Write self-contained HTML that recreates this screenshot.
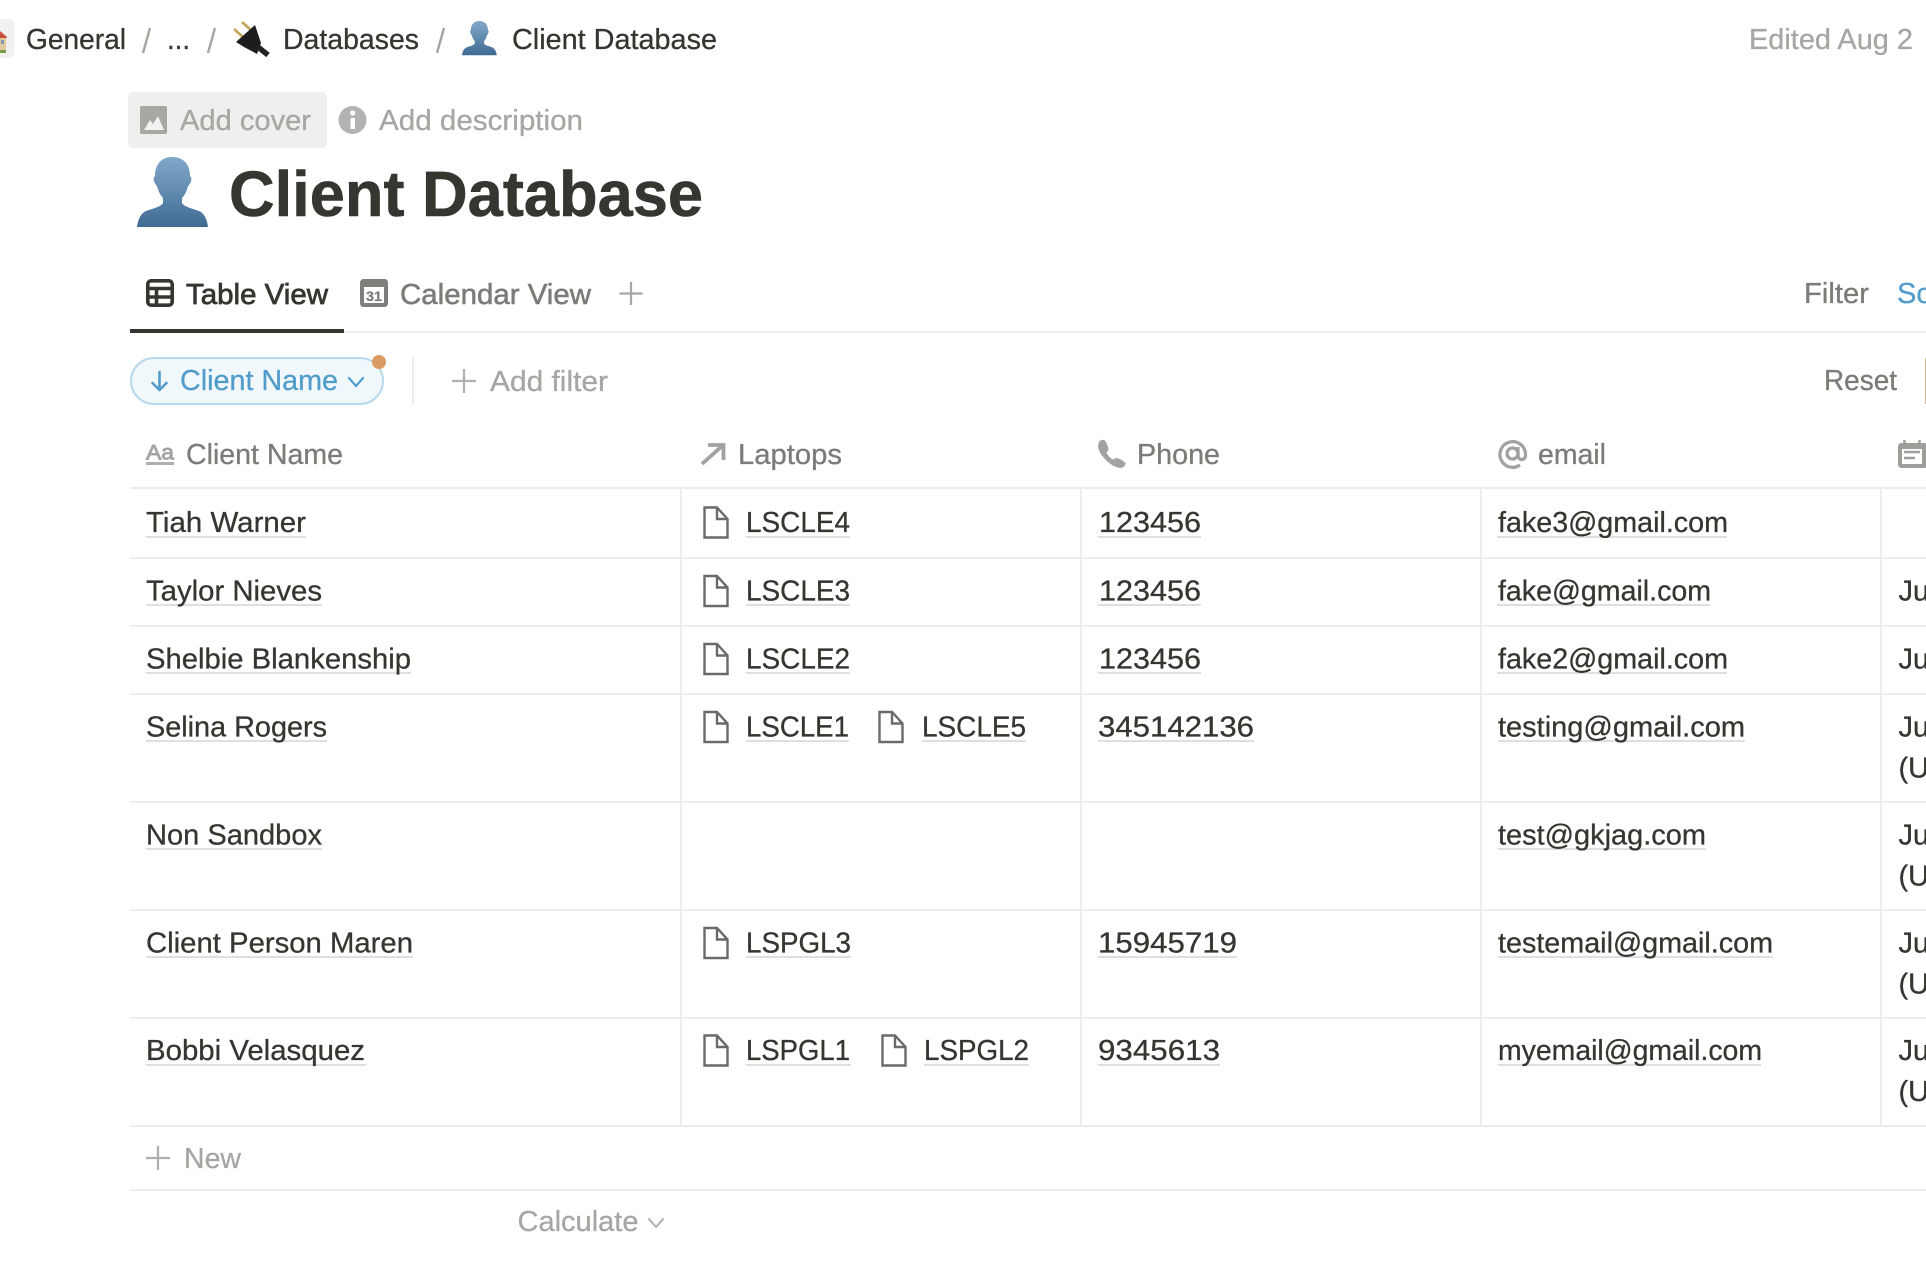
<!DOCTYPE html>
<html lang="en">
<head>
<meta charset="utf-8">
<title>Client Database</title>
<style>
html,body{margin:0;padding:0;background:#fff;width:1926px;height:1284px;overflow:hidden}
svg{display:block}
text{font-family:"Liberation Sans",sans-serif;font-size:29px;fill:#37352f;stroke:#37352f;stroke-width:.3px}
.g{fill:#7c7b77;stroke:#7c7b77}
.l{fill:#a7a6a3;stroke:#a7a6a3}
.b{fill:#529cca;stroke:#529cca}
.t{font-size:64px;font-weight:700;stroke-width:.6px}
.m{stroke-width:.75px}
.u{fill:#dfdfdd}
.h{fill:#ededec}
.s{fill:none;stroke-linecap:round;stroke-linejoin:round}
</style>
</head>
<body>
<svg xmlns="http://www.w3.org/2000/svg" width="1926" height="1284" viewBox="0 0 1926 1284">
<defs>
<linearGradient id="pg" x1="0" y1="0" x2="0" y2="1"><stop offset="0" stop-color="#82a9ca"/><stop offset="1" stop-color="#3f6a92"/></linearGradient>
<path id="p" fill="url(#pg)" d="M172 157C161 157 155 165 155 176C154 177 153 178 154 181C155 184 156 185 157 186C158 190 160 195 163 198L163 203C161 207 151 209 146 211C141 213 138 219 137 227L208 227C207 219 204 213 199 211C194 209 184 207 182 203L182 198C185 195 187 190 188 186C189 185 190 184 191 181C192 178 191 177 190 176C190 165 184 157 172 157Z"/>
<g id="d" fill="none" stroke="#6b6a66" stroke-width="2.4" stroke-linejoin="miter"><path d="M704.5 507.5H717L727.5 519V537.5H704.5Z"/><path d="M717 507.5V519H727.5"/></g>
</defs>
<rect width="1926" height="1284" fill="#fff"/>

<!-- breadcrumb -->
<rect x="-12" y="19" width="26" height="39" rx="5" fill="#f1f1ef"/>
<path d="M0 31L7 37V38H0Z" fill="#c9503f"/>
<rect x="0" y="38" width="6" height="12" fill="#e4c9a0"/>
<rect x="1" y="40" width="3" height="4" fill="#7e9bb0"/>
<rect x="0" y="50" width="6" height="3" fill="#7f9a4a"/>
<text x="26" y="49" textLength="100" lengthAdjust="spacingAndGlyphs">General</text>
<path d="M150 28L143 53M215 28L208 53M444 28L437 53" stroke="#a6a5a2" stroke-width="2.4" fill="none"/>
<text x="167" y="49" textLength="23" lengthAdjust="spacingAndGlyphs">...</text>
<path d="M242 22L252 31M234 29L244 38" stroke="#c4a65a" stroke-width="2.8"/>
<path d="M255 25L236 42L244 47L257 54L261 43Z" fill="#1d1d1d"/>
<path d="M258 47L268 55" stroke="#222" stroke-width="5.500"/>
<text x="283" y="49" textLength="136" lengthAdjust="spacingAndGlyphs">Databases</text>
<use href="#p" transform="translate(462 21) scale(.49) translate(-137 -157)"/>
<text x="512" y="49" textLength="205" lengthAdjust="spacingAndGlyphs">Client Database</text>
<text class="l" x="1749" y="49" textLength="164" lengthAdjust="spacingAndGlyphs">Edited Aug 2</text>

<!-- cover / description -->
<rect x="128" y="92" width="199" height="56" rx="5" fill="#efefee"/>
<rect x="140" y="106" width="27" height="28" rx="2" fill="#a8a7a4"/>
<path d="M144 130L150 120L153 124L158 116L164 130Z" fill="#f2f2f1"/>
<text class="l" x="180" y="130" textLength="131" lengthAdjust="spacingAndGlyphs">Add cover</text>
<circle cx="352.500" cy="120" r="14" fill="#b4b3b1"/>
<rect x="350.500" y="118" width="4.500" height="11" fill="#fff"/>
<circle cx="352.700" cy="113" r="2.600" fill="#fff"/>
<text class="l" x="379" y="130" textLength="204" lengthAdjust="spacingAndGlyphs">Add description</text>

<!-- title -->
<use href="#p"/>
<text class="t" x="229" y="216" textLength="474" lengthAdjust="spacingAndGlyphs">Client Database</text>

<!-- tabs -->
<g fill="none" stroke="#37352f" stroke-width="3.600"><rect x="147.800" y="280.800" width="24.400" height="24.400" rx="3.500"/><path d="M147.800 288.500H172.200M147.800 297H172.200M156.500 288.500V305.200"/></g>
<text class="m" x="186" y="304" textLength="142" lengthAdjust="spacingAndGlyphs">Table View</text>
<rect x="360" y="279" width="28" height="28" rx="3.500" fill="#7f7e7a"/>
<rect x="364" y="287" width="20" height="16" fill="#fff"/>
<text x="366" y="301" style="font-size:14px;font-weight:700;fill:#7f7e7a;stroke:#7f7e7a" textLength="16" lengthAdjust="spacingAndGlyphs">31</text>
<text class="g m" style="stroke-width:.55px" x="400" y="304" textLength="191" lengthAdjust="spacingAndGlyphs">Calendar View</text>
<path d="M631 282V305M619.500 293.500H642.500" stroke="#a7a6a3" stroke-width="2.200" fill="none"/>
<text class="g" x="1804" y="303" textLength="65" lengthAdjust="spacingAndGlyphs">Filter</text>
<text class="b" x="1897" y="303">Sort</text>
<rect x="130" y="331" width="1796" height="2" class="h"/>
<rect x="130" y="329" width="214" height="4" fill="#37352f"/>

<!-- filter row -->
<rect x="131" y="358" width="252" height="46" rx="23" fill="#f0f8fc" stroke="#b7d8ea" stroke-width="2"/>
<circle cx="379" cy="362" r="7" fill="#db9b63"/>
<path d="M159.500 372V390M152.500 383L159.500 390L166.500 383" class="s" stroke="#529cca" stroke-width="2.600"/>
<text class="b" x="180" y="390" textLength="158" lengthAdjust="spacingAndGlyphs">Client Name</text>
<path d="M349 378L356 386L363 378" class="s" stroke="#529cca" stroke-width="2.200"/>
<rect x="412" y="357" width="2" height="48" fill="#ededec"/>
<path d="M464 369V393M452 381H476" stroke="#b0afad" stroke-width="2.200" fill="none"/>
<text class="l" x="490" y="391" textLength="118" lengthAdjust="spacingAndGlyphs">Add filter</text>
<text class="g" x="1824" y="390" textLength="73" lengthAdjust="spacingAndGlyphs">Reset</text>
<rect x="1925" y="358" width="1" height="46" fill="#d9bb96"/>

<!-- header -->
<text x="146" y="459.500" style="font-size:21.500px;fill:#a5a4a1;stroke:#a5a4a1;stroke-width:.9px" textLength="28" lengthAdjust="spacingAndGlyphs">Aa</text>
<rect x="146" y="462" width="28" height="3" fill="#b0afad"/>
<text class="g" x="186" y="464" textLength="157" lengthAdjust="spacingAndGlyphs">Client Name</text>
<path d="M702 464L722 446M708 445H723.500V460" fill="none" stroke="#a3a2a0" stroke-width="3.800"/>
<text class="g" x="738" y="464" textLength="104" lengthAdjust="spacingAndGlyphs">Laptops</text>
<path d="M1099 443C1098 441 1102 439.500 1104 440C1106 441 1108 446 1108.500 449C1108.500 451 1106.500 452 1106.500 453C1107.500 455 1111 459 1113 459.500C1114.500 459.500 1115.500 457.500 1117 458C1119 458.500 1124 461 1125.500 463C1126 465 1123.500 468 1120 468C1111 467 1098 455 1098 445Z" fill="#a3a2a0"/>
<text class="g" x="1137" y="464" textLength="83" lengthAdjust="spacingAndGlyphs">Phone</text>
<g fill="none" stroke="#a3a2a0" stroke-width="3.300"><path d="M1520 465A12.800 12.800 0 1 1 1525.500 453.500V455C1525.500 461 1518 461 1518 455V447"/><circle cx="1512.500" cy="453.500" r="5.500"/></g>
<text class="g" x="1538" y="464" textLength="68" lengthAdjust="spacingAndGlyphs">email</text>
<rect x="1898" y="443" width="30" height="25" rx="3.500" fill="#9f9e9b"/>
<rect x="1902" y="449" width="20" height="15" fill="#fff"/>
<path d="M1904.500 440V445M1919.500 440V445" stroke="#9f9e9b" stroke-width="2.400"/>
<path d="M1904 452H1920M1904 458H1915" stroke="#9f9e9b" stroke-width="2.400"/>

<!-- grid lines -->
<rect x="130" y="487" width="1796" height="2" class="h"/>
<rect x="130" y="557" width="1796" height="2" class="h"/>
<rect x="130" y="625" width="1796" height="2" class="h"/>
<rect x="130" y="693" width="1796" height="2" class="h"/>
<rect x="130" y="801" width="1796" height="2" class="h"/>
<rect x="130" y="909" width="1796" height="2" class="h"/>
<rect x="130" y="1017" width="1796" height="2" class="h"/>
<rect x="130" y="1125" width="1796" height="2" class="h"/>
<rect x="130" y="1189" width="1796" height="2" class="h"/>
<rect x="680" y="489" width="2" height="636" class="h"/>
<rect x="1080" y="489" width="2" height="636" class="h"/>
<rect x="1480" y="489" width="2" height="636" class="h"/>
<rect x="1880" y="489" width="2" height="636" class="h"/>

<!-- row 1 -->
<rect x="146" y="536" width="160" height="2" class="u"/>
<text x="146" y="532" textLength="160" lengthAdjust="spacingAndGlyphs">Tiah Warner</text>
<use href="#d"/>
<rect x="746" y="536" width="104" height="2" class="u"/>
<text x="746" y="532" textLength="104" lengthAdjust="spacingAndGlyphs">LSCLE4</text>
<rect x="1098" y="536" width="103" height="2" class="u"/>
<text x="1099" y="532" textLength="102" lengthAdjust="spacingAndGlyphs">123456</text>
<rect x="1497" y="536" width="230" height="2" class="u"/>
<text x="1498" y="532" textLength="230" lengthAdjust="spacingAndGlyphs">fake3@gmail.com</text>

<!-- row 2 -->
<rect x="146" y="604" width="176" height="2" class="u"/>
<text x="146" y="600.300" textLength="176" lengthAdjust="spacingAndGlyphs">Taylor Nieves</text>
<use href="#d" y="68.500"/>
<rect x="746" y="604" width="104" height="2" class="u"/>
<text x="746" y="600.300" textLength="104" lengthAdjust="spacingAndGlyphs">LSCLE3</text>
<rect x="1098" y="604" width="103" height="2" class="u"/>
<text x="1099" y="600.300" textLength="102" lengthAdjust="spacingAndGlyphs">123456</text>
<rect x="1497" y="604" width="213" height="2" class="u"/>
<text x="1498" y="600.300" textLength="213" lengthAdjust="spacingAndGlyphs">fake@gmail.com</text>
<text x="1898.500" y="600.300">Jul 27, 2022</text>

<!-- row 3 -->
<rect x="146" y="672" width="265" height="2" class="u"/>
<text x="146" y="668.300" textLength="265" lengthAdjust="spacingAndGlyphs">Shelbie Blankenship</text>
<use href="#d" y="136.500"/>
<rect x="746" y="672" width="104" height="2" class="u"/>
<text x="746" y="668.300" textLength="104" lengthAdjust="spacingAndGlyphs">LSCLE2</text>
<rect x="1098" y="672" width="103" height="2" class="u"/>
<text x="1099" y="668.300" textLength="102" lengthAdjust="spacingAndGlyphs">123456</text>
<rect x="1497" y="672" width="230" height="2" class="u"/>
<text x="1498" y="668.300" textLength="230" lengthAdjust="spacingAndGlyphs">fake2@gmail.com</text>
<text x="1898.500" y="668.300">Jul 27, 2022</text>

<!-- row 4 -->
<rect x="146" y="740" width="181" height="2" class="u"/>
<text x="146" y="736.300" textLength="181" lengthAdjust="spacingAndGlyphs">Selina Rogers</text>
<use href="#d" y="204.500"/>
<rect x="746" y="740" width="103" height="2" class="u"/>
<text x="746" y="736.300" textLength="103" lengthAdjust="spacingAndGlyphs">LSCLE1</text>
<use href="#d" x="175" y="204.500"/>
<rect x="922" y="740" width="104" height="2" class="u"/>
<text x="922" y="736.300" textLength="104" lengthAdjust="spacingAndGlyphs">LSCLE5</text>
<rect x="1098" y="740" width="156" height="2" class="u"/>
<text x="1098" y="736.300" textLength="156" lengthAdjust="spacingAndGlyphs">345142136</text>
<rect x="1498" y="740" width="247" height="2" class="u"/>
<text x="1498" y="736.300" textLength="247" lengthAdjust="spacingAndGlyphs">testing@gmail.com</text>
<text x="1898.500" y="736.300">Jul 27, 2022</text>
<text x="1898.500" y="777.500">(UTC)</text>

<!-- row 5 -->
<rect x="146" y="848" width="176" height="2" class="u"/>
<text x="146" y="844.300" textLength="176" lengthAdjust="spacingAndGlyphs">Non Sandbox</text>
<rect x="1498" y="848" width="208" height="2" class="u"/>
<text x="1498" y="844.300" textLength="208" lengthAdjust="spacingAndGlyphs">test@gkjag.com</text>
<text x="1898.500" y="844.300">Jul 27, 2022</text>
<text x="1898.500" y="885.500">(UTC)</text>

<!-- row 6 -->
<rect x="146" y="956" width="267" height="2" class="u"/>
<text x="146" y="952.300" textLength="267" lengthAdjust="spacingAndGlyphs">Client Person Maren</text>
<use href="#d" y="420.500"/>
<rect x="746" y="956" width="105" height="2" class="u"/>
<text x="746" y="952.300" textLength="105" lengthAdjust="spacingAndGlyphs">LSPGL3</text>
<rect x="1098" y="956" width="139" height="2" class="u"/>
<text x="1098" y="952.300" textLength="139" lengthAdjust="spacingAndGlyphs">15945719</text>
<rect x="1498" y="956" width="275" height="2" class="u"/>
<text x="1498" y="952.300" textLength="275" lengthAdjust="spacingAndGlyphs">testemail@gmail.com</text>
<text x="1898.500" y="952.300">Jul 27, 2022</text>
<text x="1898.500" y="993.500">(UTC)</text>

<!-- row 7 -->
<rect x="146" y="1064" width="220" height="2" class="u"/>
<text x="146" y="1060" textLength="219" lengthAdjust="spacingAndGlyphs">Bobbi Velasquez</text>
<use href="#d" y="528"/>
<rect x="746" y="1064" width="105" height="2" class="u"/>
<text x="746" y="1060" textLength="104" lengthAdjust="spacingAndGlyphs">LSPGL1</text>
<use href="#d" x="178" y="528"/>
<rect x="924" y="1064" width="105" height="2" class="u"/>
<text x="924" y="1060" textLength="105" lengthAdjust="spacingAndGlyphs">LSPGL2</text>
<rect x="1098" y="1064" width="122" height="2" class="u"/>
<text x="1098" y="1060" textLength="122" lengthAdjust="spacingAndGlyphs">9345613</text>
<rect x="1498" y="1064" width="263" height="2" class="u"/>
<text x="1498" y="1060" textLength="264" lengthAdjust="spacingAndGlyphs">myemail@gmail.com</text>
<text x="1898.500" y="1060">Jul 27, 2022</text>
<text x="1898.500" y="1101">(UTC)</text>

<!-- footer -->
<path d="M158 1146V1170M146 1158H170" stroke="#b0afad" stroke-width="2.200" fill="none"/>
<text class="l" x="184" y="1168" textLength="57" lengthAdjust="spacingAndGlyphs">New</text>
<text class="l" x="517.500" y="1231" textLength="121" lengthAdjust="spacingAndGlyphs">Calculate</text>
<path d="M649 1219L656 1227L663 1219" class="s" stroke="#b0afad" stroke-width="2"/>
</svg>
</body>
</html>
